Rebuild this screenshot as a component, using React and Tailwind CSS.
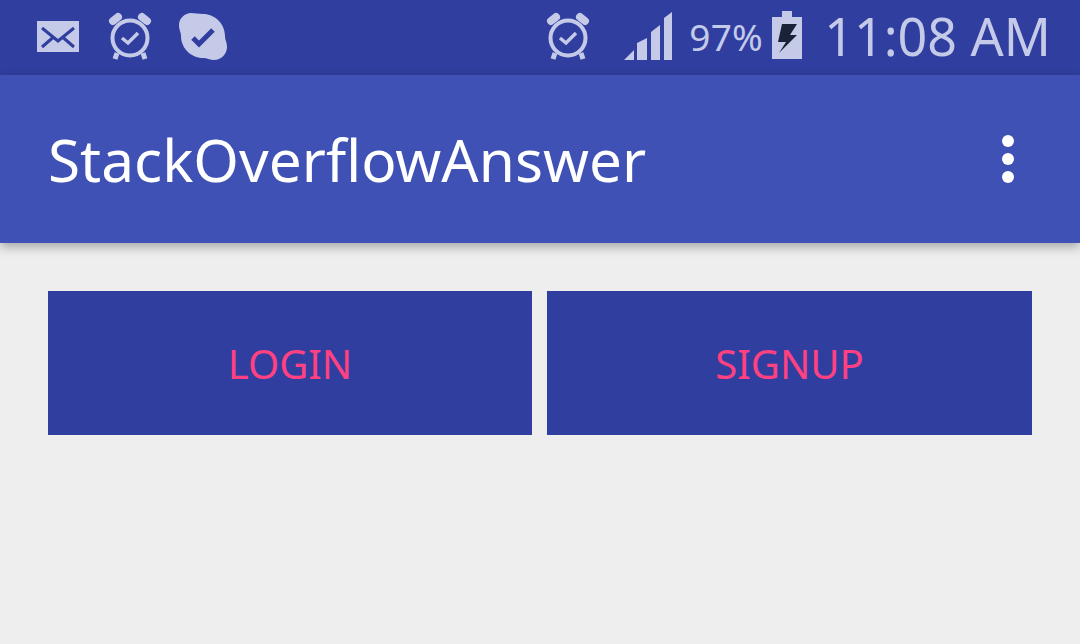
import React from 'react'

const font = { fontFamily: '"Noto Sans", sans-serif' }

const MailIcon = () => (
  <svg width="42" height="31" viewBox="0 0 42 31" className="block">
    <rect width="42" height="31" fill="#c5cae9" />
    <path d="M5 7 L21 20 L37 7 M5 26 L16 16.5 M37 26 L26 16.5" fill="none" stroke="#303f9f" strokeWidth="3" />
  </svg>
)

const AlarmIcon = () => (
  <svg width="44" height="48" viewBox="0 0 44 48" className="block">
    <circle cx="22" cy="26" r="17.5" fill="none" stroke="#c5cae9" strokeWidth="4" />
    <path d="M5 9 L10 5 M39 9 L34 5" fill="none" stroke="#c5cae9" strokeWidth="8" strokeLinecap="round" />
    <path d="M14 26 L20 31 L30 21" fill="none" stroke="#c5cae9" strokeWidth="3.5" />
    <path d="M9 41 L7 47 M35 41 L37 47" fill="none" stroke="#c5cae9" strokeWidth="5" />
  </svg>
)

const SkypeIcon = () => (
  <svg width="48" height="48" viewBox="0 0 48 48" className="block">
    <path d="M12 1 C16 1 19 2 24 2 C36 2 46 12 46 24 C46 28 48 30 48 35 C48 42 42 48 35 48 C31 48 28 46 24 46 C12 46 2 36 2 24 C2 20 0 18 0 13 C0 6 6 1 12 1 Z" fill="#c5cae9" />
    <path d="M14 26 L20 32 L34 18" fill="none" stroke="#303f9f" strokeWidth="5" />
  </svg>
)

const SignalIcon = () => (
  <svg width="48" height="48" viewBox="0 0 48 48" className="block">
    <path d="M0 48 L10 38 V48 Z M13 31 L23 26 V48 H13 Z M27 20 L36 13 V48 H27 Z M40 6 L48 0 V48 H40 Z" fill="#c5cae9" />
  </svg>
)

const BatteryIcon = () => (
  <svg width="30" height="48" viewBox="0 0 30 48" className="block">
    <path d="M10 0 H20 V6 H30 V48 H0 V6 H10 Z" fill="#c5cae9" />
    <path d="M10 13 H25 L18 24 H25 L7 42 L14 31 H6 Z" fill="#1a2238" />
  </svg>
)

const StatusBar = () => (
  <div className="h-[75px] bg-[#303f9f] flex items-center pl-[37px] pr-[29px] pb-[3px] text-[#c5cae9]">
    <div className="mr-[29px] mt-[1px]"><MailIcon /></div>
    <div className="mr-[27px]"><AlarmIcon /></div>
    <SkypeIcon />
    <div className="ml-auto mr-[34px]"><AlarmIcon /></div>
    <div className="mr-[17px]"><SignalIcon /></div>
    <span className="text-[37px] leading-none tracking-[0.3px] mr-[9px]" style={font}>97%</span>
    <div className="mr-[22px] -mt-[2px]"><BatteryIcon /></div>
    <span className="text-[52px] leading-none font-normal" style={font}>11:08 AM</span>
  </div>
)

const Toolbar = () => (
  <div className="h-[168px] bg-[#3f51b5] flex items-center justify-between pl-[48px] pr-[66px] shadow-[0_4px_10px_rgba(0,0,0,0.3)] relative">
    <span className="text-[58.5px] leading-none text-white" style={font}>StackOverflowAnswer</span>
    <div className="flex flex-col gap-[6px]">
      <div className="w-3 h-3 rounded-full bg-white" />
      <div className="w-3 h-3 rounded-full bg-white" />
      <div className="w-3 h-3 rounded-full bg-white" />
    </div>
  </div>
)

const App = () => {
  return (
    <div className="w-[1080px] h-[644px] bg-[#eeeeee] overflow-hidden">
      <StatusBar />
      <Toolbar />
      <div className="flex gap-[15px] pt-[48px] pl-[48px] pr-[48px]">
        <button className="w-[484px] h-[144px] pt-[2px] bg-[#303f9f] text-[#ff4081] text-[40px]" style={font}>LOGIN</button>
        <button className="flex-1 h-[144px] pt-[2px] bg-[#303f9f] text-[#ff4081] text-[40px]" style={font}>SIGNUP</button>
      </div>
    </div>
  )
}

export default App
